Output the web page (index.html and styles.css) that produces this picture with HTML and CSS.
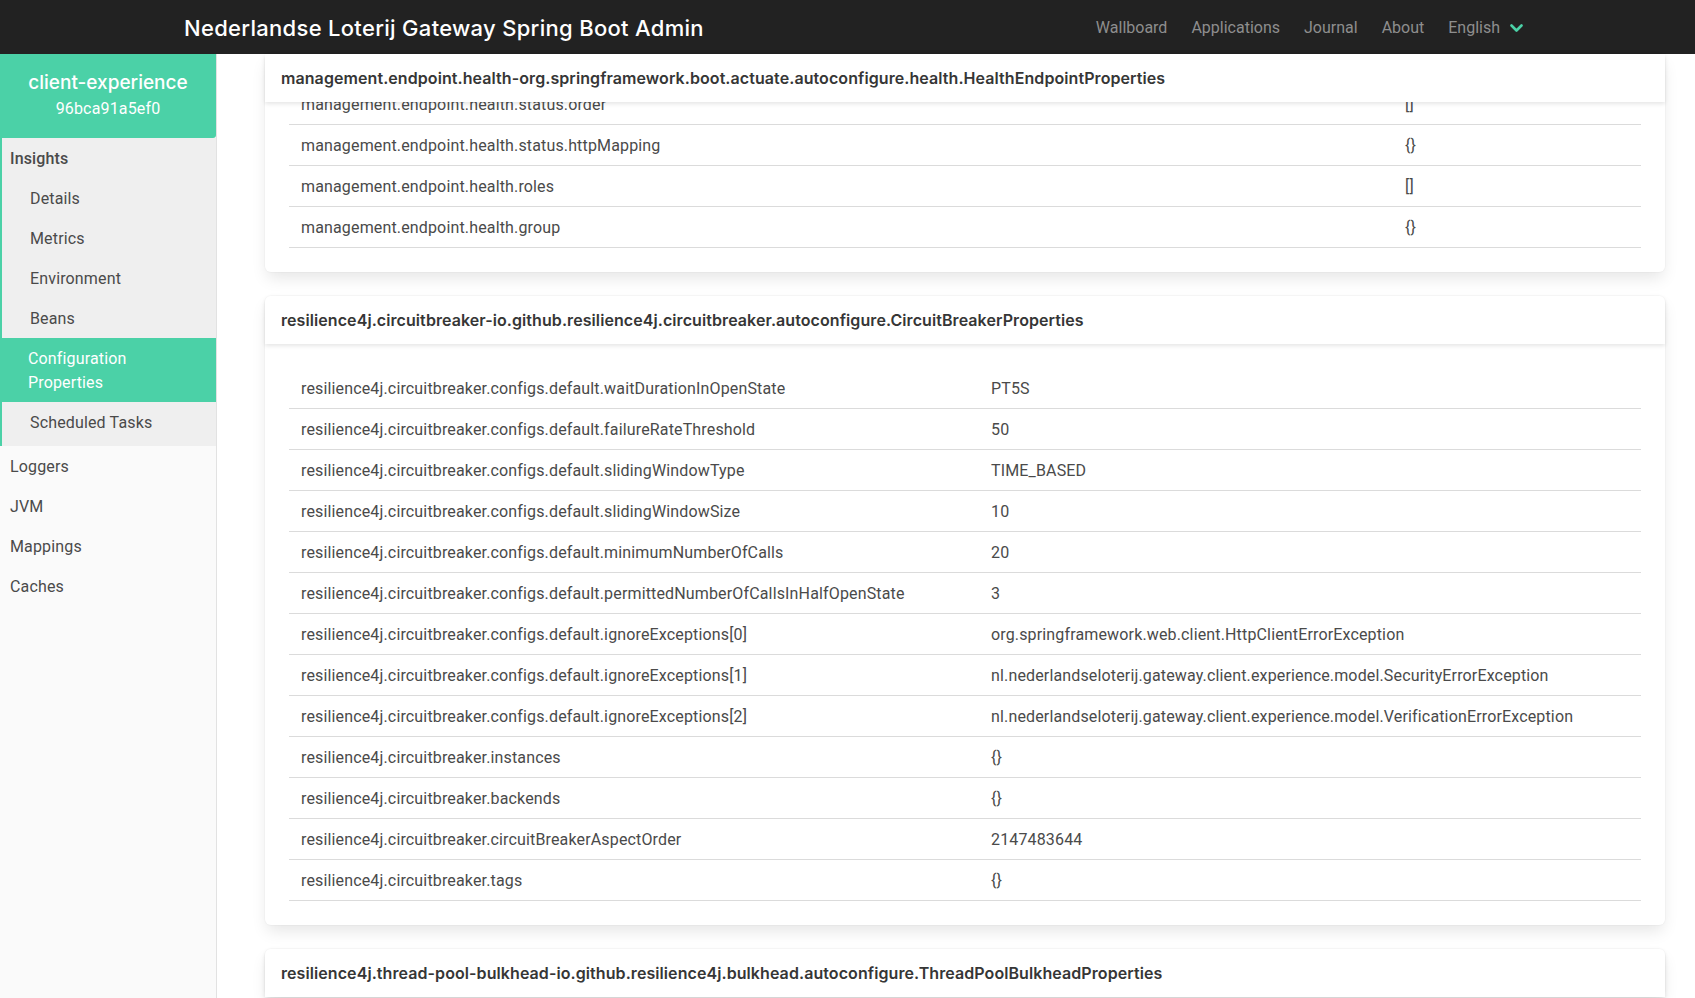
FILE: index.html
```html
<!DOCTYPE html>
<html lang="en">
<head>
<meta charset="utf-8">
<title>Nederlandse Loterij Gateway Spring Boot Admin</title>
<link rel="stylesheet" href="styles.css">
</head>
<body>
<nav class="navbar">
  <div class="navbar-container">
    <a class="brand">Nederlandse Loterij Gateway Spring Boot Admin</a>
    <div class="navbar-menu">
      <a class="nav-item">Wallboard</a>
      <a class="nav-item">Applications</a>
      <a class="nav-item">Journal</a>
      <a class="nav-item">About</a>
      <a class="nav-item nav-lang">English
        <svg class="chevron" width="13" height="9" viewBox="0 0 13 9"><polyline points="1.5,1.5 6.5,6.5 11.5,1.5" fill="none" stroke="#4bd1a7" stroke-width="2.6" stroke-linecap="round" stroke-linejoin="round"/></svg>
      </a>
    </div>
  </div>
</nav>
<div class="layout">
  <aside class="sidebar">
    <div class="instance-head">
      <div class="instance-name">client-experience</div>
      <div class="instance-id">96bca91a5ef0</div>
    </div>
    <ul class="side-menu">
      <li class="group">
        <a class="menu-link group-title">Insights</a>
        <ul class="submenu">
          <li><a class="menu-link sub">Details</a></li>
          <li><a class="menu-link sub">Metrics</a></li>
          <li><a class="menu-link sub">Environment</a></li>
          <li><a class="menu-link sub">Beans</a></li>
          <li><a class="menu-link sub active">Configuration Properties</a></li>
          <li><a class="menu-link sub">Scheduled Tasks</a></li>
        </ul>
      </li>
      <li><a class="menu-link">Loggers</a></li>
      <li><a class="menu-link">JVM</a></li>
      <li><a class="menu-link">Mappings</a></li>
      <li><a class="menu-link">Caches</a></li>
    </ul>
  </aside>
  <main class="main">
    <div class="card">
      <header class="card-header over">
        <p class="card-title">management.endpoint.health-org.springframework.boot.actuate.autoconfigure.health.HealthEndpointProperties</p>
      </header>
      <div class="card-content scrolled">
        <table class="props props-health">
          <colgroup><col class="key-health"><col></colgroup>
          <tbody>
            <tr><td>management.endpoint.health.status.order</td><td>[]</td></tr>
            <tr><td>management.endpoint.health.status.httpMapping</td><td>{}</td></tr>
            <tr><td>management.endpoint.health.roles</td><td>[]</td></tr>
            <tr><td>management.endpoint.health.group</td><td>{}</td></tr>
          </tbody>
        </table>
      </div>
    </div>

    <div class="card">
      <header class="card-header">
        <p class="card-title">resilience4j.circuitbreaker-io.github.resilience4j.circuitbreaker.autoconfigure.CircuitBreakerProperties</p>
      </header>
      <div class="card-content">
        <table class="props">
          <colgroup><col class="key-cb"><col></colgroup>
          <tbody>
            <tr><td>resilience4j.circuitbreaker.configs.default.waitDurationInOpenState</td><td>PT5S</td></tr>
            <tr><td>resilience4j.circuitbreaker.configs.default.failureRateThreshold</td><td>50</td></tr>
            <tr><td>resilience4j.circuitbreaker.configs.default.slidingWindowType</td><td>TIME_BASED</td></tr>
            <tr><td>resilience4j.circuitbreaker.configs.default.slidingWindowSize</td><td>10</td></tr>
            <tr><td>resilience4j.circuitbreaker.configs.default.minimumNumberOfCalls</td><td>20</td></tr>
            <tr><td>resilience4j.circuitbreaker.configs.default.permittedNumberOfCallsInHalfOpenState</td><td>3</td></tr>
            <tr><td>resilience4j.circuitbreaker.configs.default.ignoreExceptions[0]</td><td>org.springframework.web.client.HttpClientErrorException</td></tr>
            <tr><td>resilience4j.circuitbreaker.configs.default.ignoreExceptions[1]</td><td>nl.nederlandseloterij.gateway.client.experience.model.SecurityErrorException</td></tr>
            <tr><td>resilience4j.circuitbreaker.configs.default.ignoreExceptions[2]</td><td>nl.nederlandseloterij.gateway.client.experience.model.VerificationErrorException</td></tr>
            <tr><td>resilience4j.circuitbreaker.instances</td><td>{}</td></tr>
            <tr><td>resilience4j.circuitbreaker.backends</td><td>{}</td></tr>
            <tr><td>resilience4j.circuitbreaker.circuitBreakerAspectOrder</td><td>2147483644</td></tr>
            <tr><td>resilience4j.circuitbreaker.tags</td><td>{}</td></tr>
          </tbody>
        </table>
      </div>
    </div>

    <div class="card">
      <header class="card-header">
        <p class="card-title">resilience4j.thread-pool-bulkhead-io.github.resilience4j.bulkhead.autoconfigure.ThreadPoolBulkheadProperties</p>
      </header>
    </div>
  </main>
</div>
</body>
</html>
```

FILE: styles.css
```css
* { box-sizing: border-box; }
html, body {
  margin: 0;
  padding: 0;
  height: 998px;
  overflow: hidden;
}
body {
  font-family: Roboto, "Liberation Sans", sans-serif;
  font-size: 16px;
  line-height: 24px;
  letter-spacing: 0.15px;
  color: #4a4a4a;
  background: #ffffff;
}
a { text-decoration: none; color: inherit; }
ul { list-style: none; margin: 0; padding: 0; }

.navbar {
  height: 54px;
  background: #222222;
}
.navbar-container {
  width: 1351px;
  height: 54px;
  margin: 0 auto;
  display: flex;
  align-items: center;
  justify-content: space-between;
}
.brand {
  padding: 2px 12px 0;
  color: #ffffff;
  font-family: Inter, Roboto, sans-serif;
  font-size: 22px;
  font-weight: 500;
  letter-spacing: 0.3px;
}
.navbar-menu {
  display: flex;
  align-items: center;
  padding-top: 2px;
}
.nav-item {
  padding: 0 12px;
  color: #8e8e8e;
  font-size: 16px;
  letter-spacing: 0;
}
.nav-lang {
  display: flex;
  align-items: center;
  gap: 10px;
  padding-right: 0;
}
.chevron { display: block; margin-top: 1px; }

.layout {
  display: flex;
  height: 944px;
}
.sidebar {
  width: 217px;
  flex: none;
  background: #fafafa;
  border-right: 1px solid #e2e2e2;
}
.instance-head {
  background: #4bd1a7;
  color: #ffffff;
  text-align: center;
  height: 84px;
  padding-top: 15px;
  border-bottom-right-radius: 3px;
}
.instance-name {
  font-family: Inter, Roboto, sans-serif;
  font-size: 19px;
  font-weight: 500;
  line-height: 28px;
  letter-spacing: 0;
}
.instance-id {
  font-size: 16px;
  line-height: 24px;
}
.side-menu { padding: 0; }
.menu-link {
  display: block;
  padding: 9px 10px 7px;
  color: #4a4a4a;
}
.group {
  background: #efefef;
  border-left: 2px solid #4bd1a7;
  padding-bottom: 4px;
}
.group .menu-link { padding-left: 8px; }
.group-title { font-weight: 500; }
.group .menu-link.sub { padding-left: 28px; }
.menu-link.active {
  background: #4bd1a7;
  color: #ffffff;
  margin-left: -2px;
  padding-left: 30px;
  padding-right: 40px;
}

.main {
  flex: 1;
  padding: 0 30px 0 48px;
  display: flex;
  flex-direction: column;
}
.card {
  background: #ffffff;
  border-radius: 6px;
  box-shadow: 0 8px 16px -2px rgba(10, 10, 10, 0.1), 0 0 0 1px rgba(10, 10, 10, 0.02);
  margin-bottom: 24px;
  flex: none;
}
.card-header {
  height: 48px;
  display: flex;
  align-items: center;
  padding: 0 16px;
  background: #ffffff;
  border-radius: 6px 6px 0 0;
  box-shadow: 0 2px 4px rgba(10, 10, 10, 0.1);
}
.card-header.over {
  position: relative;
  z-index: 2;
  border-radius: 0;
}
.card-title {
  margin: 0;
  font-family: Inter, Roboto, sans-serif;
  font-weight: 600;
  letter-spacing: 0.08px;
  color: #363636;
  white-space: nowrap;
}
.card-content {
  padding: 24px;
}
.card-content.scrolled {
  margin-top: -18px;
  padding-top: 0;
}
.props {
  width: 100%;
  border-collapse: collapse;
  table-layout: fixed;
}
.props td {
  padding: 9px 12px 7px;
  border-bottom: 1px solid #dbdbdb;
  vertical-align: top;
  white-space: nowrap;
  color: #4a4a4a;
}
.key-health { width: 1104px; }
.key-cb { width: 690px; }
```
